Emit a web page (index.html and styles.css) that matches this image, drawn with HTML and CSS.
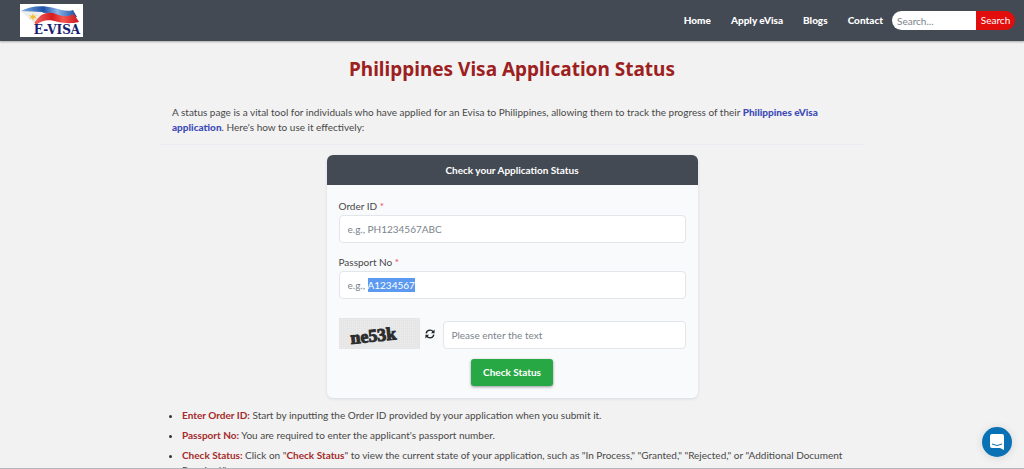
FILE: index.html
```html
<!DOCTYPE html>
<html lang="en">
<head>
	<meta charset="utf-8">
	<meta name="viewport" content="width=device-width, initial-scale=1">
	<title>Philippines Visa Application Status</title>
	<link rel="stylesheet" href="styles.css">
</head>
<body>

<header class="navbar">
	<a class="logo" href="#" aria-label="E-Visa">
		<svg width="63" height="33" viewBox="0 0 63 33">
			<defs>
				<linearGradient id="blue" x1="0" x2="1">
					<stop offset="0" stop-color="#7fb2e8"/>
					<stop offset="0.4" stop-color="#1d4fa6"/>
					<stop offset="0.65" stop-color="#8ab6ea"/>
					<stop offset="1" stop-color="#184a9c"/>
				</linearGradient>
				<linearGradient id="red" x1="0" x2="1">
					<stop offset="0" stop-color="#f06a60"/>
					<stop offset="0.4" stop-color="#d81c20"/>
					<stop offset="0.65" stop-color="#f4574f"/>
					<stop offset="1" stop-color="#c8141c"/>
				</linearGradient>
			</defs>
			<rect width="63" height="33" fill="#fff"/>
			<path d="M1 7C10 2 22 1 34 4C42 6 47 8 53 6L57 13C49 14 41 13 34 11C25 7 16 9 9 12Z" fill="url(#blue)"/>
			<path d="M14 18C20 10 28 7 36 10C43 13 49 13 54 10L59 18C50 20 45 19 38 18C29 15 22 16 16 21Z" fill="url(#red)"/>
			<path d="M1 7L23 8L14 19Z" fill="#eeeeea"/>
			<path d="M13 9l1 3 3-1-2 2 2 2-3-1-1 3-1-3-3 1 2-2-2-2 3 1z" fill="#f0bd35"/>
			<text x="37" y="30" class="logo_text">E-VISA</text>
		</svg>
	</a>
	<nav class="menu">
		<a href="#">Home</a>
		<a href="#">Apply eVisa</a>
		<a href="#">Blogs</a>
		<a href="#">Contact</a>
	</nav>
	<form class="search">
		<input type="search" class="search_input" placeholder="Search..." aria-label="Search">
		<button type="button" class="search_button">Search</button>
	</form>
</header>

<main class="container">
	<h1>Philippines Visa Application Status</h1>

	<p class="intro">A status page is a vital tool for individuals who have applied for an Evisa to Philippines, allowing them to track the progress of their <a href="#">Philippines eVisa application</a>. Here's how to use it effectively:</p>

	<!-- status form -->
	<form class="card">
		<h2 class="card_header">Check your Application Status</h2>
		<div class="card_body">
			<div class="field">
				<label for="order_id">Order ID <span class="required">*</span></label>
				<input type="text" class="input" id="order_id" placeholder="e.g., PH1234567ABC">
			</div>
			<div class="field">
				<label for="passport_no">Passport No <span class="required">*</span></label>
				<div class="input_wrap">
					<input type="text" class="input" id="passport_no" placeholder="e.g.,">
					<mark class="sample">A1234567</mark>
				</div>
			</div>
			<div class="captcha_row">
				<svg class="captcha" width="81" height="31" viewBox="0 0 81 31" role="img" aria-label="Captcha">
					<defs>
						<pattern id="grain" width="2" height="2" patternUnits="userSpaceOnUse">
							<rect width="2" height="2" fill="#e9e9e9"/>
							<rect width="1" height="1" fill="#e2e2e2"/>
						</pattern>
					</defs>
					<rect width="81" height="31" fill="url(#grain)"/>
					<text class="captcha_text" x="12" y="26" transform="rotate(-6 12 26)">ne53k</text>
				</svg>
				<button type="button" class="refresh" aria-label="Refresh captcha">
					<svg width="10" height="10" viewBox="0 0 512 512" fill="none" stroke="#212529" stroke-width="70">
						<path d="M60 220C80 110 165 60 256 60C330 60 390 95 425 150"/>
						<path d="M452 292C432 402 347 452 256 452C182 452 122 417 87 362"/>
						<path d="M490 30V215H305Z" fill="#212529" stroke="none"/>
						<path d="M22 482V297H207Z" fill="#212529" stroke="none"/>
					</svg>
				</button>
				<input type="text" class="input captcha_input" placeholder="Please enter the text" aria-label="Captcha text">
			</div>
			<button type="button" class="check_button">Check Status</button>
		</div>
	</form>

	<ul class="steps">
		<li><strong>Enter Order ID:</strong> Start by inputting the Order ID provided by your application when you submit it.</li>
		<li><strong>Passport No:</strong> You are required to enter the applicant's passport number.</li>
		<li><strong>Check Status:</strong> Click on "<strong>Check Status</strong>" to view the current state of your application, such as "In Process," "Granted," "Rejected," or "Additional Document Required."</li>
	</ul>
</main>

<button type="button" class="chat" aria-label="Open chat">
	<svg width="14" height="16" viewBox="0 0 14 16">
		<path d="M2 0H12Q14 0 14 2V16L10 14H2Q0 14 0 12V2Q0 0 2 0Z" fill="#fff"/>
		<path d="M2 10Q7 13 12 10" fill="none" stroke="#0a71b5" stroke-width="1"/>
	</svg>
</button>

</body>
</html>
```
FILE: styles.css
```css
* {
	box-sizing: border-box;
}
body {
	margin: 0;
	height: 100vh;
	overflow: hidden;
	background-color: #f2f2f2;
	border-bottom: 1px solid #b4b6bc;
	color: #484848;
	font-family: Lato, "Noto Sans", sans-serif;
	font-size: 10px;
	line-height: 15px;
}
input, button {
	font: inherit;
}
button {
	border: 0;
	padding: 0;
	cursor: pointer;
}
a {
	text-decoration: none;
}

/* top bar */
.navbar {
	display: flex;
	align-items: center;
	height: 41px;
	padding: 0 9px 0 20px;
	background-color: #434a54;
	box-shadow: 0 1px 2px rgba(0, 0, 0, 0.3);
}
.logo {
	display: flex;
	margin-right: auto;
}
.logo_text {
	font-family: "DejaVu Serif", serif;
	font-size: 12px;
	font-weight: bold;
	fill: #17206f;
	text-anchor: middle;
}
.menu {
	display: flex;
	gap: 20px;
	margin-right: 9px;
}
.menu a {
	color: #fff;
	font-weight: 900;
}
.search {
	display: flex;
}
.search_input {
	width: 84px;
	height: 19px;
	padding: 0 5px;
	border: 0;
	border-radius: 10px 0 0 10px;
	background-color: #fff;
}
.search_button {
	width: 39px;
	height: 19px;
	border-radius: 0 10px 10px 0;
	background-color: #e20d0d;
	color: #fff;
}

.container {
	max-width: 704px;
	margin: 0 auto;
	padding: 0 12px;
}
h1 {
	margin: 14px 0 22px;
	color: #9d2020;
	font-family: "Noto Sans", sans-serif;
	font-size: 19px;
	line-height: 28px;
	text-align: center;
}
.intro {
	margin: 0 -12px 10px;
	padding: 0 12px 9px;
	border-bottom: 1px solid #ebecf2;
}
.intro a {
	color: #3f4db8;
	font-weight: 900;
}

/* form */
.card {
	max-width: 371px;
	margin: 0 auto 10px;
	border-radius: 6px;
	background-color: #f8fafc;
	box-shadow: 0 1px 3px rgba(60, 80, 110, 0.15);
}
.card_header {
	margin: 0;
	padding: 8px;
	border-radius: 6px 6px 0 0;
	background-color: #434a54;
	color: #fff;
	font-size: 10px;
	font-weight: bold;
	line-height: 14px;
	text-align: center;
}
.card_body {
	padding: 12px;
}
.field {
	margin-bottom: 10px;
}
.field label {
	display: block;
	line-height: 18px;
}
.required {
	color: #e8474f;
}
.input {
	display: block;
	width: 100%;
	height: 28px;
	padding: 0 8px;
	border: 1px solid #e2e6ea;
	border-radius: 4px;
	background-color: #fff;
}
.input::placeholder, .search_input::placeholder {
	color: #7b838b;
}
.input_wrap {
	position: relative;
}
.sample {
	position: absolute;
	top: 7px;
	left: 29px;
	background-color: #5b9af0;
	color: #fff;
	line-height: 14px;
}
.captcha_row {
	display: flex;
	align-items: flex-end;
	padding-top: 9px;
	margin-bottom: 10px;
}
.captcha_text {
	font-family: "Liberation Serif", serif;
	font-size: 18px;
	font-weight: bold;
	fill: #2d2d2d;
	stroke: #2d2d2d;
	stroke-width: 1px;
}
.refresh {
	display: flex;
	align-self: center;
	margin: 0 8px 0 5px;
	background: none;
}
.captcha_input {
	flex: 1;
}
.check_button {
	display: block;
	width: 82px;
	height: 27px;
	margin: 0 auto;
	border-radius: 3px;
	background-color: #28a745;
	box-shadow: 0 1px 3px rgba(0, 0, 0, 0.4);
	color: #fff;
	font-weight: bold;
}

.steps {
	margin: 0;
	padding-left: 10px;
}
.steps li {
	margin-bottom: 5px;
}
.steps li::marker {
	color: #333;
}
.steps strong {
	color: #a52a2a;
	font-weight: bold;
}

.chat {
	position: fixed;
	right: 12px;
	bottom: 12px;
	display: flex;
	align-items: center;
	justify-content: center;
	width: 30px;
	height: 30px;
	border-radius: 50%;
	background-color: #0a71b5;
	box-shadow: 0 1px 8px rgba(0, 0, 0, 0.12);
}
```
